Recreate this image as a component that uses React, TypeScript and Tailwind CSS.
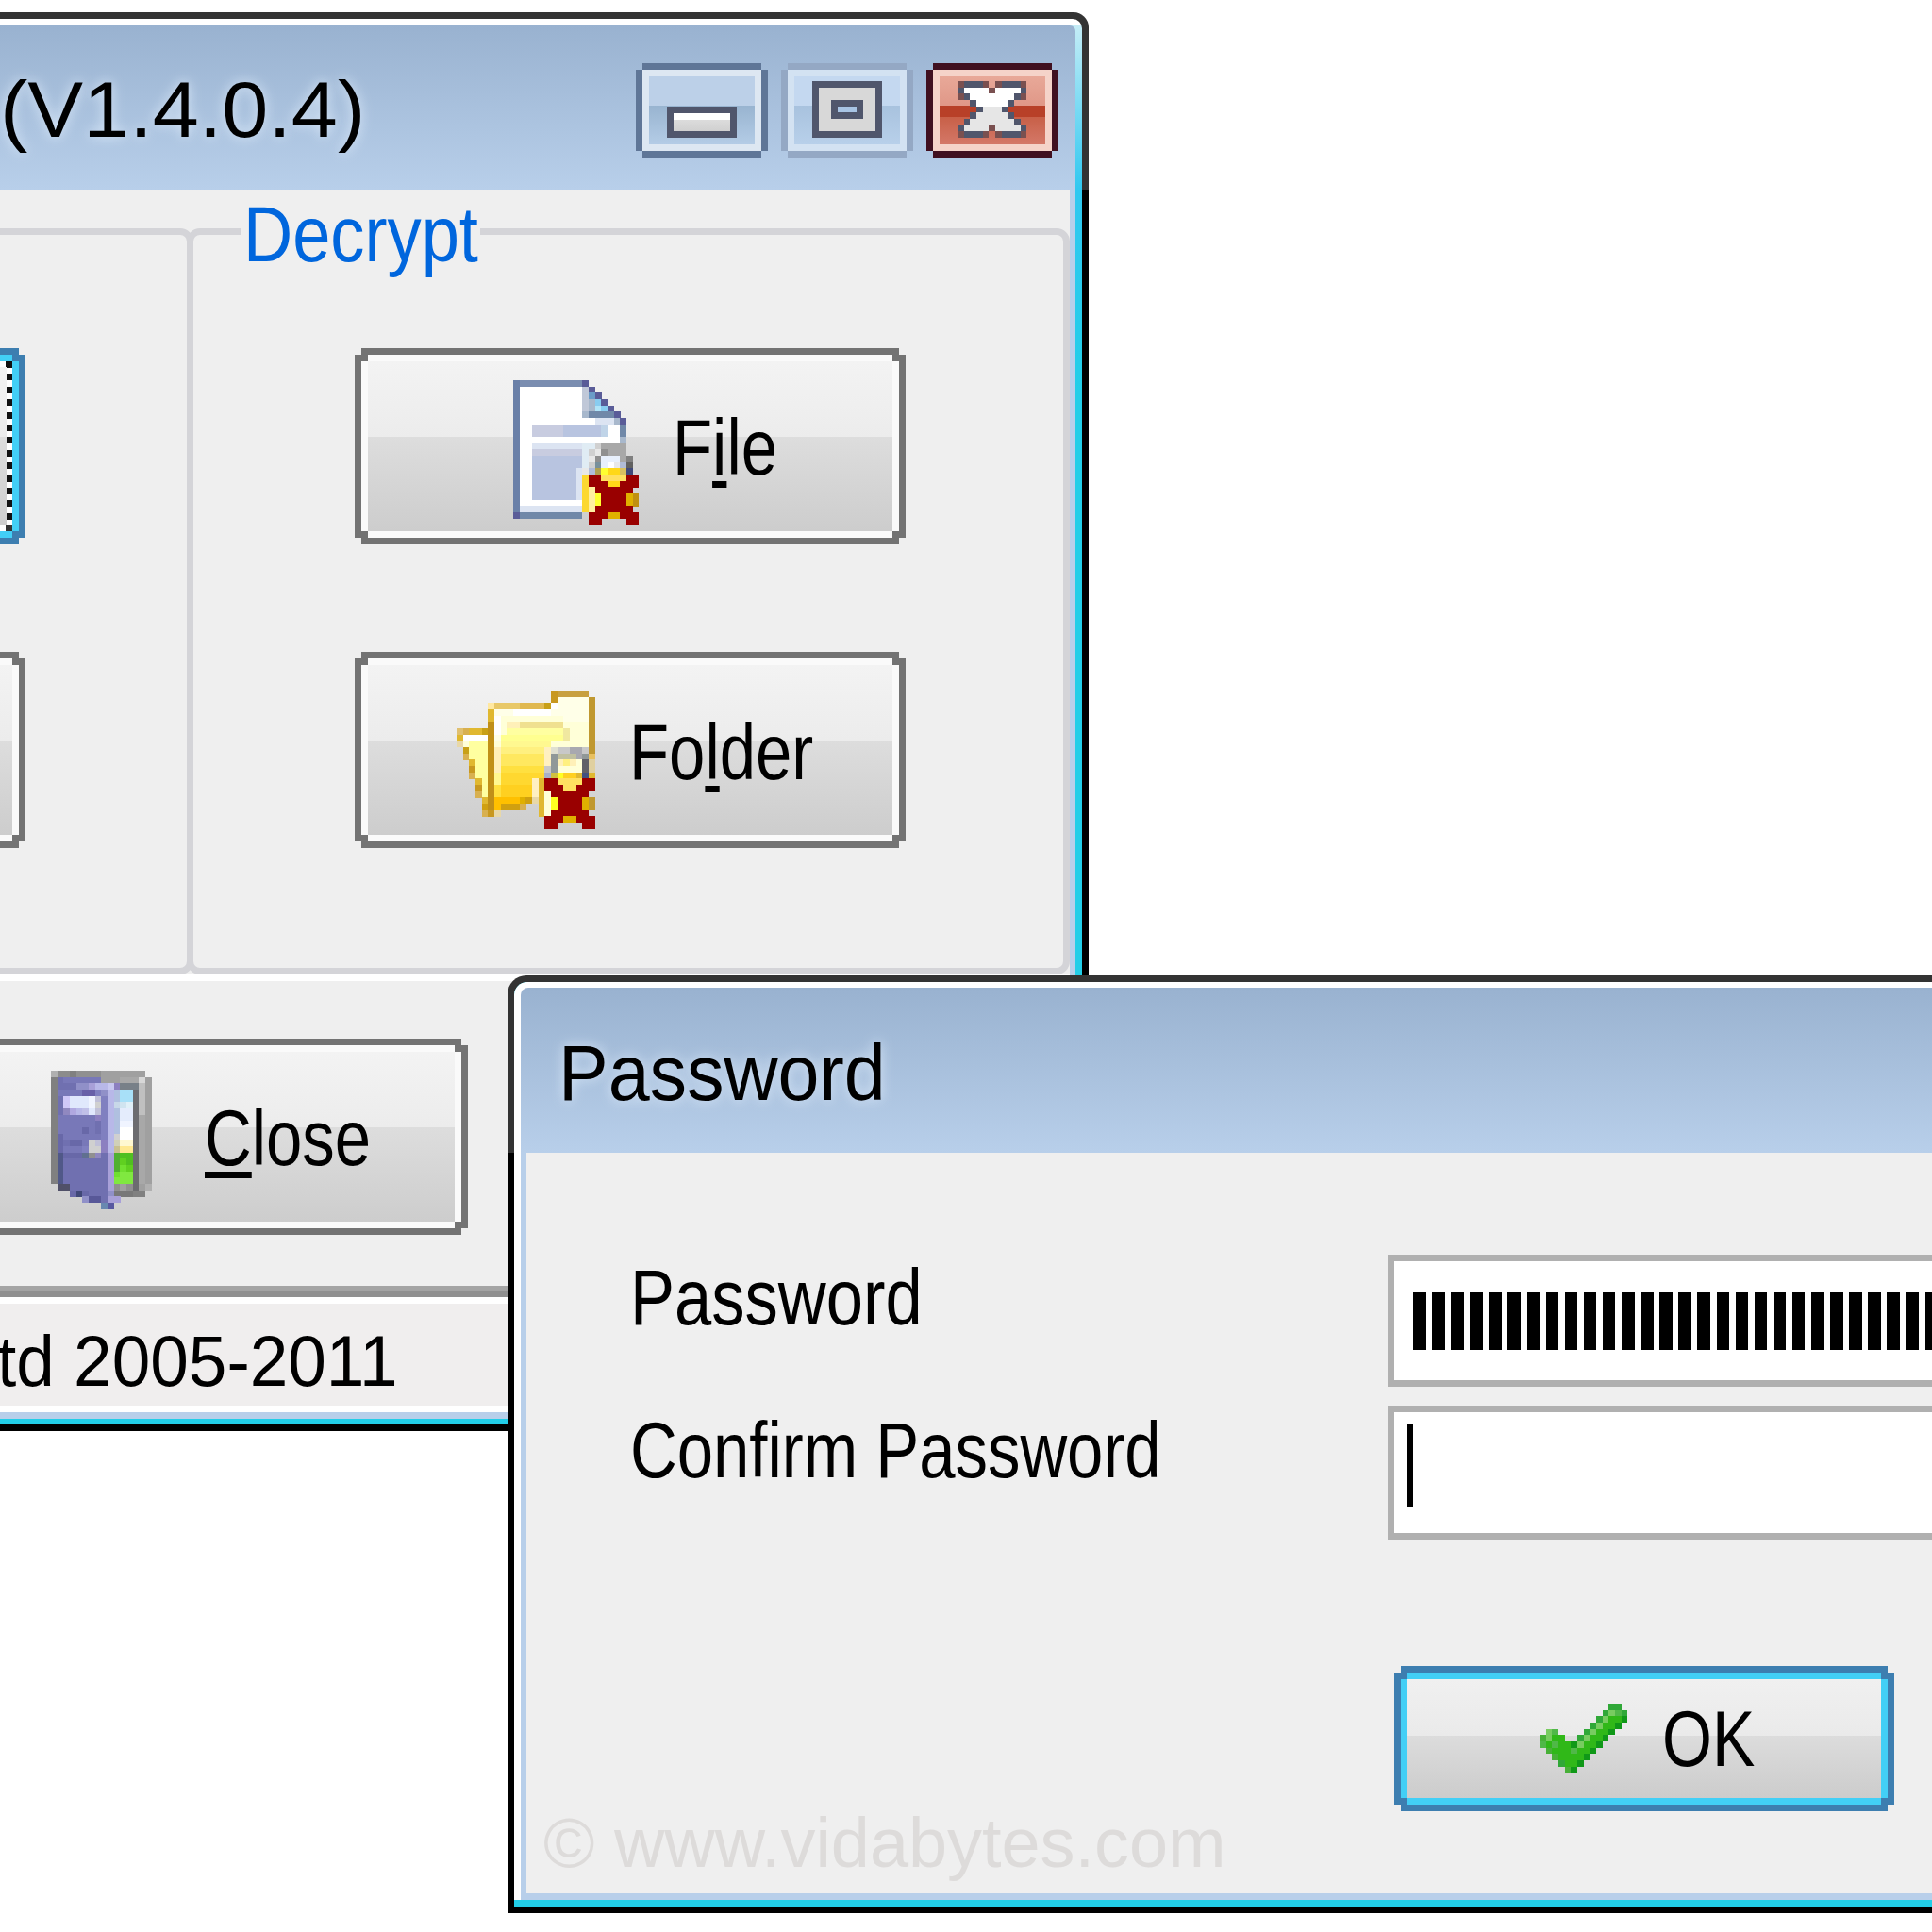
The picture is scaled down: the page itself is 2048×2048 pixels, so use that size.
import type { ReactNode } from "react"

const PX = 6.67

const notch =
  "[clip-path:polygon(7px_0,calc(100%-7px)_0,calc(100%-7px)_7px,100%_7px,100%_calc(100%-7px),calc(100%-7px)_calc(100%-7px),calc(100%-7px)_100%,7px_100%,7px_calc(100%-7px),0_calc(100%-7px),0_7px,7px_7px)]"

function PixelArt({ rows, palette }: { rows: string[]; palette: Record<string, string> }) {
  const w = rows[0].length
  const h = rows.length
  return (
    <svg
      width={w * PX}
      height={h * PX}
      viewBox={`0 0 ${w} ${h}`}
      shapeRendering="crispEdges"
      className="shrink-0"
    >
      {rows.map((row, y) =>
        row.split("").map((c, x) =>
          palette[c] ? <rect key={`${x}-${y}`} x={x} y={y} width={1.02} height={1.02} fill={palette[c]} /> : null,
        ),
      )}
    </svg>
  )
}

const fileRows = [
  "Bbbbbbbbbbbd........",
  "Bwwwwwwwwwwad.......",
  "Bwwwwwwwwwwacd......",
  "Bwwwwwwwwwwaged.....",
  "Bwwwwwwwwwwagfed....",
  "Bwwwwwwwwwwghhhhd...",
  "Bwwwwwwwwwwwwnnngd..",
  "Bwwlllllmmmmmmpwwh..",
  "Bwwlllllmmmmmmpwwh..",
  "Bwwwwwwwwwwwwwwwwg..",
  "Bwwnnnnnnnnooqrrrr..",
  "Bwwlllllllloqstrrr..",
  "BwwmmmmmmmmostuuurT.",
  "BwwmmmmmmmmoqvuwsxD.",
  "BwwmmmmmmmnsxyYzzAE.",
  "BwwmmmmmmmnZRRFFFFRR",
  "BwwmmmmmmmnZRRRzzRRR",
  "BwwmmmmmmmnZGRRRRRR.",
  "BwwmmmmmmmnZGYRRRRHI",
  "BwwwwwwwwwwZGYRRRRHI",
  "BnnnnnnnnnnZGRRRRRR.",
  "dhhhhhhhhhh.RRRHHRRR",
  "............RR....RR",
]

const filePalette: Record<string, string> = {
  B: "#6a80a8", b: "#7a8db0", d: "#5a5c98", w: "#ffffff", a: "#c0c8d8", c: "#6a9cc8",
  g: "#a8b8cc", e: "#88ccf0", f: "#b0e4f8", h: "#7088a8", n: "#dce4f2", l: "#c8cce0",
  m: "#b8c4e0", p: "#c0d4e8", o: "#e0ecf4", q: "#d0d0d0", r: "#a8a8a8", s: "#e8e8e8",
  t: "#909090", u: "#e8f0fc", T: "#808080", v: "#78909c", x: "#b0bcd8", D: "#606060",
  y: "#b0a050", Y: "#ffff30", z: "#ffd818", A: "#d8c060", E: "#404878", Z: "#fcd830",
  R: "#990000", F: "#ffe060", G: "#fff0a0", H: "#e0b000", I: "#c09010",
}

const folderRows = [
  "...............Gggggg.",
  "...............GcccccD",
  ".....peeeeffffhWcccccD",
  ".....jcccWWWWWWccccccD",
  ".....jWllllllllllccccD",
  ".....kWlmmnnnnnnnllllD",
  "tujjhkWlooooooooolllD".slice(0, 17) + "qlllD",
  "jWWWWkcssssssssssqlllD",
  "vlooo" + "kl" + "xxxxxxxx" + "llllllD",
  ".hoookm" + "yyyyyyy" + "zaAABBAD",
  ".uoookm" + "JJJJJJJ" + "zECCCBEH",
  "..jookm" + "JJJJJJJ" + "zEmymlMI",
  "..Gookm" + "KKKKKKK" + "AEllllMI",
  "..uookx" + "LLLLLLL" + "NOPQQjSj",
  "...jokx" + "LLLLL" + "zjRRTTTTRR",
  "...GokK" + "QQQQQ" + "zjRRRTTRRR",
  "...uokK" + "QQQQQ" + "zjlRRRRRR.",
  "....jkVVVVUXvjlPRRRRUD",
  "....XkVXXXu..jlPRRRRUD",
  "....uGv......jlRRRRRR.",
  "..............RRRUURRR",
  "..............RR....RR",
]

const folderPalette: Record<string, string> = {
  G: "#c89820", g: "#c8a040", W: "#ffffff", c: "#ffffe8", D: "#c09830", p: "#ffe8a0",
  e: "#e8c868", f: "#e0b850", h: "#c8a018", j: "#e0b830", k: "#c09018", l: "#ffffd8",
  m: "#fff0b8", n: "#f0e090", o: "#ffffa0", q: "#f0e8a0", s: "#ffff90", t: "#e0c070",
  u: "#d8b050", v: "#e8d8a8", x: "#fff890", y: "#fff080", z: "#fff0c0", a: "#e0e0d0",
  A: "#c8c8c8", B: "#a8a8b0", C: "#c0c0a0", E: "#909898", H: "#e8c060", I: "#e0d0a0",
  J: "#ffe860", K: "#ffe040", L: "#ffd830", M: "#606068", N: "#a8b0c8", O: "#d0c040",
  P: "#ffff20", Q: "#ffd020", S: "#405080", R: "#990000", T: "#ffe060", U: "#e0b000",
  V: "#ffc000", X: "#d0a010",
}

const doorRows = [
  "ahhgiiiijjjjjjj.",
  "gcbbbbbbjjjkkklj",
  "gcccddeffnopppmj",
  "gbbbbqqydfrsstmj",
  "gcuvvvwxyfrsstmj",
  "gcuvvvwHyfzABtmj",
  "gcCDfEvxyfrFFtmj",
  "gbbbbbboyfrFFtkj",
  "gbbbbbbcyfrwwtkj",
  "gbbbbGbcyfrIItkj",
  "gGbbbbbbyfHIItkj",
  "gGcGGbHxofJKKtkj",
  "gGbbbyHHofLMMtkj",
  "gNGGGOiCcePQQtkj",
  "gNcccccccePRQtkj",
  "gNcccccccePSRtkj",
  "gNccccccceSTTtkj",
  "gNccccccceTTTtkj",
  ".UUcccccceijitja",
  "...GVGcccdZZZgg.",
  ".....dWWcee.....",
  "........XY......",
]

const doorPalette: Record<string, string> = {
  a: "#b0b0b0", g: "#808080", h: "#8c8c8c", i: "#909090", j: "#a0a0a0", k: "#a8a8a8",
  l: "#d8d8d8", m: "#c0c0c0", b: "#7878b8", c: "#7070b0", d: "#9090c8", e: "#a8a0d8",
  f: "#b8b8e8", n: "#c8c8f0", o: "#8c80c0", p: "#788088", q: "#6860a8", r: "#b0c0e0",
  s: "#a8e0f8", t: "#6c6c70", u: "#d0c8f8", v: "#e0e8fc", w: "#f0f4ff", x: "#c0c0d8",
  y: "#8080c0", z: "#c8d8e8", A: "#d0e4f0", B: "#e0f0f8", C: "#9088c0", D: "#b0a8e0",
  E: "#c0c0e8", F: "#e4ecfc", G: "#6868a8", H: "#d0d0d0", I: "#ffffff", J: "#d0d0b8",
  K: "#fff8d0", L: "#c8c090", M: "#ffe890", N: "#505888", O: "#607090", P: "#50b030",
  Q: "#50c020", R: "#60d020", S: "#70e030", T: "#80e840", U: "#505068", V: "#404878",
  W: "#585898", X: "#6888b0", Y: "#5858a0", Z: "#787878",
}

const checkRows = [
  "...........aa.",
  "..........abca",
  ".........abdde",
  "........abdde.",
  ".bc....abdde..",
  "fbdd..abdde...",
  "cdcddebdde....",
  ".fdddcdde.....",
  "..fdddde......",
  "...adde.......",
  "....fe........",
]

const checkPalette: Record<string, string> = {
  a: "#30a838", b: "#78cc60", c: "#50b848", d: "#30b818", e: "#109818", f: "#48b038",
}

const closeGlyphRows = [
  "bdddb.bdddb",
  "dwwwwbwwwwd",
  "bdwwwwwwwdb",
  "..dwwwwwd..",
  "...dvvvd...",
  "..dvvvvvd..",
  ".dvvvvvvvd.",
  "dvvvvbvvvvd",
  "bdddb.bdddb",
]

const closeGlyphPalette: Record<string, string> = {
  b: "#7a5050", d: "#50566c", w: "#ffffff", v: "#e6e6e6",
}

function CaptionButton({ className, children }: { className: string; children: ReactNode }) {
  return (
    <div className={`h-[100px] w-[140px] border-[7px] ${notch} ${className}`}>
      <div className="h-full w-full">{children}</div>
    </div>
  )
}

function PushButton({
  frame = "bg-[#737373]",
  rim = "bg-[#fafafa]",
  width = "w-[584px]",
  pad,
  children,
}: {
  frame?: string
  rim?: string
  width?: string
  pad: string
  children?: ReactNode
}) {
  return (
    <div className={`${width} h-[208px] shrink-0 p-[7px] ${notch} ${frame}`}>
      <div className={`relative h-full w-full p-[7px] ${notch} ${rim}`}>
        <div
          className={`flex h-full w-full items-start bg-[linear-gradient(180deg,#f3f3f3_0%,#ececec_44.4%,#dddddd_44.4%,#cdcdcd_100%)] ${pad}`}
        >
          {children}
        </div>
      </div>
    </div>
  )
}

export default function App() {
  return (
    <div className="relative h-[2048px] w-[2048px] overflow-hidden bg-white font-['Liberation_Sans',sans-serif] text-[84px] leading-none text-black">
      {/* main window, runs off the left of the shot */}
      <div className="absolute left-[-760px] top-[13px] w-[1914px] rounded-tr-[16px] bg-[linear-gradient(180deg,#333333_0,#333333_188px,#000000_188px)] p-[7px]">
        <div className="rounded-tr-[10px] bg-[linear-gradient(180deg,#ffffff_0,#ffffff_7px,#c4ecf6_7px,#30c8f0_181px,#22cee8_400px)] pb-[6px] pr-[7px] pt-[7px]">
          <div className="flex h-[174px] items-start rounded-tr-[6px] bg-[linear-gradient(180deg,#99b2d0,#b8cfea)] pl-[753px] pr-[18px]">
            <span className="mt-[47px] inline-block origin-left scale-x-[1.05] whitespace-nowrap [text-shadow:0_0_14px_rgba(225,238,252,0.95)]">
              (V1.4.0.4)
            </span>
            <div className="ml-auto mt-[40px] flex gap-[14px]">
              <CaptionButton className="border-[#5f7697]">
                <div className="flex h-full items-end justify-center border-[7px] border-[#dde7f2] bg-[linear-gradient(180deg,#bcd0e8_0%,#bcd0e8_43%,#98b4d0_43%,#b4cce6_100%)] pb-[7px]">
                  <div className={`h-[33px] w-[74px] border-[7px] border-[#50566c] bg-[linear-gradient(180deg,#ffffff_0,#ffffff_7px,#dcdcdc_7px,#d0d0d0_100%)]`} />
                </div>
              </CaptionButton>
              <CaptionButton className="border-[#94a8c4]">
                <div className="flex h-full items-end justify-center border-[7px] border-[#d3e2f2] bg-[linear-gradient(180deg,#c4d8f0_0%,#c4d8f0_43%,#a8c2de_43%,#b8d0ea_100%)] pb-[7px]">
                  <div className="flex h-[60px] w-[74px] justify-center border-[7px] border-[#50566c] bg-[#d8d8d8] pt-[13px]">
                    <div className="h-[20px] w-[34px] border-[7px] border-[#50566c] bg-[#a8c4e4]" />
                  </div>
                </div>
              </CaptionButton>
              <CaptionButton className="border-[#401020]">
                <div className="flex h-full items-end justify-center border-[7px] border-[#f5d3c9] bg-[linear-gradient(180deg,#e8a898_0%,#e09888_43%,#b84028_43%,#b84028_60%,#c86048_60%,#d47868_100%)] pb-[7px]">
                  <PixelArt rows={closeGlyphRows} palette={closeGlyphPalette} />
                </div>
              </CaptionButton>
            </div>
          </div>

          <div className="border-b-[7px] border-r-[6px] border-[#b8cfea] bg-[#efefef]">
            <div className="flex pl-[18px] pt-[41px]">
              {/* left group (Encrypt), only its right edge shows */}
              <div className="h-[791px] w-[940px] shrink-0 rounded-[14px] border-[7px] border-[#d4d4d8] pl-[171px] pt-[120px]">
                <div className="flex flex-col gap-[114px]">
                  <div className={`relative h-[208px] w-[584px] p-[7px] ${notch} bg-[#3d7eb0]`}>
                    <div className={`relative h-full w-full p-[7px] ${notch} bg-[#42cff6]`}>
                      <div className="relative h-full w-full bg-[linear-gradient(180deg,#f3f3f3_0%,#ececec_44.4%,#dddddd_44.4%,#cdcdcd_100%)]">
                        <div className="absolute inset-x-0 top-0 h-[6px] bg-[repeating-linear-gradient(90deg,#111111_0,#111111_7px,#ffffff_7px,#ffffff_13.4px)]" />
                        <div className="absolute inset-y-0 right-0 w-[6px] bg-[repeating-linear-gradient(180deg,#111111_0,#111111_7px,#ffffff_7px,#ffffff_13.4px)]" />
                        <div className="absolute inset-x-0 bottom-0 h-[6px] bg-[repeating-linear-gradient(90deg,#333333_0,#333333_7px,#ffffff_7px,#ffffff_13.4px)]" />
                      </div>
                    </div>
                  </div>
                  <PushButton pad="pl-0" />
                </div>
              </div>

              {/* right group */}
              <div className="relative ml-[-7px] h-[791px] flex-1 rounded-[14px] border-[7px] border-[#d4d4d8] pl-[171px] pt-[120px]">
                <span className="absolute left-[50px] top-[-43px] inline-block w-[254px] bg-[#efefef] pl-[3px] text-[#0066dd]">
                  <span className="inline-block origin-left scale-x-[0.86]">Decrypt</span>
                </span>
                <div className="flex flex-col gap-[114px]">
                  <PushButton pad="pl-[154px] pt-[20px]">
                    <PixelArt rows={fileRows} palette={filePalette} />
                    <span className="ml-[36px] mt-[29px] inline-block origin-left scale-x-[0.82]">
                      F<span className="underline decoration-[7px] underline-offset-[7px] [text-decoration-skip-ink:none]">i</span>le
                    </span>
                  </PushButton>
                  <PushButton pad="pl-[94px] pt-[27px]">
                    <PixelArt rows={folderRows} palette={folderPalette} />
                    <span className="ml-[36px] mt-[23px] inline-block origin-left scale-x-[0.82]">
                      Fo<span className="underline decoration-[7px] underline-offset-[7px] [text-decoration-skip-ink:none]">l</span>der
                    </span>
                  </PushButton>
                </div>
              </div>
            </div>

            <div className="h-[7px] bg-white" />

            <div className="flex justify-end pr-[638px] pt-[61px]">
              <PushButton pad="pl-[128px] pt-[20px]">
                <PixelArt rows={doorRows} palette={doorPalette} />
                <span className="ml-[56px] mt-[29px] inline-block origin-left scale-x-[0.82]">
                  <span className="underline decoration-[7px] underline-offset-[7px] [text-decoration-skip-ink:none]">C</span>lose
                </span>
              </PushButton>
            </div>

            <div className="mt-[54px] h-[6px] bg-[#a4a4a4]" />
            <div className="h-[6px] bg-[#909090]" />
            <div className="h-[7px] bg-white" />
            <div className="flex h-[108px] items-center justify-end bg-[#f0eeee] pr-[712px] pt-[14px] text-[76px]">
              <span className="inline-block origin-right scale-x-[0.96] whitespace-nowrap">Ltd 2005-2011</span>
            </div>
            <div className="h-[7px] bg-white" />
          </div>
        </div>
      </div>

      {/* password dialog on top */}
      <div className="absolute left-[538px] top-[1034px] h-[994px] w-[1600px] rounded-tl-[20px] bg-[linear-gradient(180deg,#333333_0,#333333_188px,#000000_188px)] p-[7px]">
        <div className="h-full overflow-hidden rounded-tl-[14px] bg-[#22cee8] pb-[7px]">
          <div className="h-full rounded-tl-[12px] bg-white pl-[7px] pt-[6px]">
            <div className="flex h-[175px] items-start rounded-tl-[8px] bg-[linear-gradient(180deg,#99b2d0,#b8cfea)] pl-[40px]">
              <span className="mt-[48px] inline-block origin-left scale-x-[0.94] [text-shadow:0_0_14px_rgba(225,238,252,0.95)]">
                Password
              </span>
            </div>
            <div className="h-[792px] overflow-hidden border-b-[7px] border-l-[6px] border-[#b8cfea] bg-[#efefef]">
              <div className="flex pl-[110px] pt-[108px]">
                <span className="mt-[3px] inline-block w-[803px] shrink-0 origin-left scale-x-[0.84]">Password</span>
                <div className="flex h-[140px] w-[700px] shrink-0 items-center gap-[6.6px] overflow-hidden border-[7px] border-[#b0b0b0] bg-white pl-[20px]">
                  {Array.from({ length: 34 }).map((_, i) => (
                    <span key={i} className="h-[61px] w-[13.5px] shrink-0 bg-black" />
                  ))}
                </div>
              </div>
              <div className="flex pl-[110px] pt-[20px]">
                <span className="mt-[5px] inline-block w-[803px] shrink-0 origin-left scale-x-[0.82] whitespace-nowrap">
                  Confirm Password
                </span>
                <div className="flex h-[142px] w-[700px] shrink-0 border-[7px] border-[#b0b0b0] bg-white pl-[13px] pt-[13px]">
                  <span className="h-[88px] w-[7px] bg-black" />
                </div>
              </div>
              <div className="pl-[920px] pt-[134px]">
                <div className={`h-[154px] w-[530px] bg-[#3d7eb0] p-[7px] ${notch}`}>
                  <div className={`h-full w-full bg-[#42cff6] p-[7px] ${notch}`}>
                    <div className="flex h-full w-full items-start bg-[linear-gradient(180deg,#f0f0f0_0%,#eaeaea_47.6%,#dcdcdc_47.6%,#cccccc_100%)] pl-[140px] pt-[26px]">
                      <PixelArt rows={checkRows} palette={checkPalette} />
                      <span className="ml-[37px] mt-[-5px] inline-block origin-left scale-x-[0.81]">OK</span>
                    </div>
                  </div>
                </div>
              </div>
              <div className="mt-[-4px] pl-[18px] text-[75px] text-[#dddbda]">
                <span className="inline-block origin-left scale-x-[0.985] whitespace-nowrap">© www.vidabytes.com</span>
              </div>
            </div>
          </div>
        </div>
      </div>
    </div>
  )
}
